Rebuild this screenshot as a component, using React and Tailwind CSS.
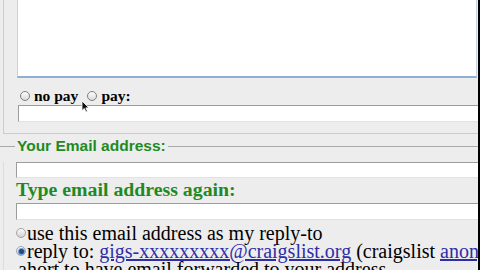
import React from 'react';

// petite case radio façon Aqua (Mac)
const Radio = ({ checked = false, small = false }) => (
  <span
    className={
      small
        ? 'relative inline-flex items-center justify-center w-[10px] h-[10px] rounded-full border border-[#a4a4a4] bg-gradient-to-b from-[#fbfbfb] to-[#d2d2d2] shrink-0'
        : 'relative inline-flex items-center justify-center w-[10px] h-[10px] rounded-full border border-[#7e7e7e] bg-gradient-to-b from-[#fdfdfd] to-[#dadada] shrink-0'
    }
  >
    {checked && <span className="w-[5px] h-[5px] rounded-full bg-[#24487a] ring-1 ring-[#6d9be0]" />}
  </span>
);

const Field = ({ className }) => (
  <div className={`bg-white border-t border-l border-[#9c9c9c] border-b border-b-[#e2e2e2] ${className}`} />
);

const Cursor = () => (
  <svg className="absolute left-[81px] top-[100px]" width="9" height="13" viewBox="0 0 9 13">
    <path d="M1 1 L1 10.5 L3.3 8.4 L5 12 L6.4 11.3 L4.8 7.9 L7.8 7.8 Z" fill="#111" stroke="#fff" strokeWidth="0.8" />
  </svg>
);

export default function App() {
  return (
    <div className="w-[480px] h-[270px] overflow-hidden flex bg-[#ededed]" style={{ fontFamily: '"Liberation Serif", "Times New Roman", serif' }}>
      <div className="relative flex-1 overflow-hidden">
        {/* bloc description / rémunération */}
        <div className="ml-[3px] h-[134px] border-l border-b border-[#cbcbcb] pl-[13px]">
          <div className="h-[78px] mr-[1px] bg-white border-l border-r border-[#c4d4e6] border-b-2 border-b-[#8fb0d2]" />
          <div className="h-[27px] pt-[8px] flex items-center pl-[3px] text-[15.5px] font-bold text-black leading-[19px]">
            <Radio />
            <span className="ml-[4px]">no pay</span>
            <span className="ml-[9px]"><Radio /></span>
            <span className="ml-[4px]">pay:</span>
          </div>
          <Field className="ml-[1px] h-[17px]" />
        </div>

        {/* bloc adresse email */}
        <div className="pt-[3px]">
          <div className="h-[18px] flex items-center">
            <div className="w-[15px] h-px bg-[#a9a9a9]" />
            <span className="px-[2px] text-[15.5px] font-bold text-[#1f8a24] leading-[18px]" style={{ fontFamily: '"Liberation Sans", Arial, sans-serif' }}>
              Your Email address:
            </span>
            <div className="flex-1 h-px bg-[#a9a9a9]" />
          </div>
          <div className="ml-[3px] border-l border-[#dcdcdc] pl-[12px]">
            <Field className="mt-[7px] h-[16px]" />
            <div className="h-[25px] text-[19.8px] font-bold text-[#1f8a24] leading-[22px]">
              Type email address again:
            </div>
            <Field className="h-[17px]" />
            <div className="mt-[4px] text-[20px] leading-[18px] text-black whitespace-nowrap">
              <div className="flex items-center">
                <Radio small />
                <span className="ml-[1px]">use this email address as my reply-to</span>
              </div>
              <div className="flex items-center">
                <Radio small checked />
                <span className="ml-[1px]">
                  reply to: <span className="text-[#2e2ea8] underline">gigs-xxxxxxxxx@craigslist.org</span> (craigslist{' '}
                  <span className="text-[#2e2ea8] underline">anonymizes your email</span>)
                </span>
              </div>
              <div className="pl-[2px]">ahort to have email forwarded to your address</div>
            </div>
          </div>
        </div>
        <Cursor />
      </div>
      <div className="w-[2px] bg-black" />
    </div>
  );
}
